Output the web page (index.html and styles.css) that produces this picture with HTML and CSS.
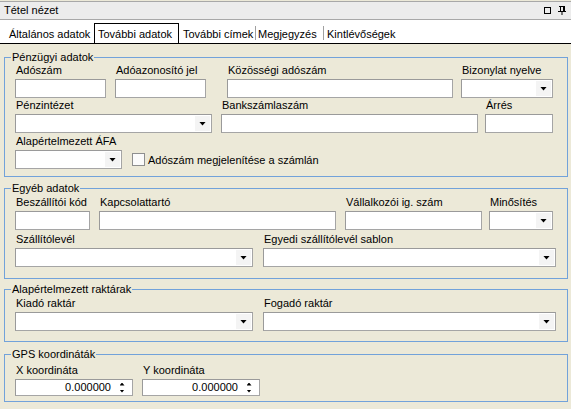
FILE: index.html
```html
<!DOCTYPE html>
<html>
<head>
<meta charset="utf-8">
<link rel="stylesheet" href="styles.css">
</head>
<body>
<div class="titlebar">
  <span class="title">Tétel nézet</span>
  <span class="tb-icons">
    <svg width="7" height="7" viewBox="0 0 7 7"><rect x="0.5" y="0.5" width="6" height="6" fill="none" stroke="#000"/></svg>
    <svg width="8" height="9" viewBox="0 0 8 9"><path d="M1 0.5h6M2.5 0.5v5M0 5.5h8M4 5.5v3.5" stroke="#000" fill="none"/><rect x="5" y="0" width="2" height="5.5" fill="#000"/></svg>
  </span>
</div>
<div class="tabs">
  <span class="tab t1">Általános adatok</span>
  <span class="tab active">További adatok</span>
  <span class="tab t3">További címek</span>
  <span class="sep"></span>
  <span class="tab t4">Megjegyzés</span>
  <span class="sep"></span>
  <span class="tab t5">Kintlévőségek</span>
</div>

<fieldset class="group g1">
  <legend>Pénzügyi adatok</legend>
  <div class="gbody">
    <div class="row">
      <div class="field w91"><label>Adószám</label><div class="input"></div></div>
      <div class="field w91 ml9"><label>Adóazonosító jel</label><div class="input"></div></div>
      <div class="field w226 ml21"><label>Közösségi adószám</label><div class="input"></div></div>
      <div class="field w92 ml8"><label>Bizonylat nyelve</label><div class="input combo"><span class="drop"></span></div></div>
    </div>
    <div class="row r2">
      <div class="field w197"><label>Pénzintézet</label><div class="input combo"><span class="drop"></span></div></div>
      <div class="field w257 ml9"><label>Bankszámlaszám</label><div class="input"></div></div>
      <div class="field w68 ml7"><label>Árrés</label><div class="input"></div></div>
    </div>
    <div class="row r3">
      <div class="field w107"><label>Alapértelmezett ÁFA</label><div class="input combo"><span class="drop"></span></div></div>
      <div class="check"><span class="box"></span><span class="check-label">Adószám megjelenítése a számlán</span></div>
    </div>
  </div>
</fieldset>

<fieldset class="group g2">
  <legend>Egyéb adatok</legend>
  <div class="gbody">
    <div class="row">
      <div class="field w75"><label>Beszállítói kód</label><div class="input"></div></div>
      <div class="field w237 ml9"><label>Kapcsolattartó</label><div class="input"></div></div>
      <div class="field w137 ml9"><label>Vállalkozói ig. szám</label><div class="input"></div></div>
      <div class="field w64 ml7"><label>Minősítés</label><div class="input combo"><span class="drop"></span></div></div>
    </div>
    <div class="row r2b">
      <div class="field w238"><label>Szállítólevél</label><div class="input combo"><span class="drop"></span></div></div>
      <div class="field w293 ml10"><label>Egyedi szállítólevél sablon</label><div class="input combo"><span class="drop"></span></div></div>
    </div>
  </div>
</fieldset>

<fieldset class="group g3">
  <legend>Alapértelmezett raktárak</legend>
  <div class="gbody">
    <div class="row">
      <div class="field w238"><label>Kiadó raktár</label><div class="input combo"><span class="drop"></span></div></div>
      <div class="field w293 ml10"><label>Fogadó raktár</label><div class="input combo"><span class="drop"></span></div></div>
    </div>
  </div>
</fieldset>

<fieldset class="group g4">
  <legend>GPS koordináták</legend>
  <div class="gbody">
    <div class="row">
      <div class="field w118"><label>X koordináta</label><div class="input spin"><span class="val">0.000000</span><span class="spinbtn"><span class="up"></span><span class="down"></span></span></div></div>
      <div class="field w118 ml9"><label>Y koordináta</label><div class="input spin"><span class="val">0.000000</span><span class="spinbtn"><span class="up"></span><span class="down"></span></span></div></div>
    </div>
  </div>
</fieldset>
</body>
</html>
```
FILE: styles.css
```css
* { box-sizing: border-box; }
html, body { margin: 0; padding: 0; }
body {
  width: 571px;
  height: 409px;
  overflow: hidden;
  background: #ece9d8;
  font-family: "Liberation Sans", Arial, sans-serif;
  font-size: 11px;
  color: #000;
}
.titlebar {
  margin-top: 1px;
  height: 19px;
  border-top: 1px solid #a8a8a8;
  border-bottom: 1px solid #a8a8a8;
  background: #ececec;
  display: flex;
  align-items: center;
  justify-content: space-between;
  padding-left: 4px;
}
.title { line-height: 17px; }
.tb-icons {
  display: flex;
  align-items: center;
  gap: 7px;
  margin-right: 5px;
}
.tb-icons svg { display: block; }
.tabs {
  height: 24px;
  background: #fff;
  border-bottom: 1px solid #000;
  display: flex;
  align-items: flex-end;
  padding-left: 5px;
}
.tab {
  display: block;
  height: 19px;
  padding-top: 1px;
  line-height: 18px;
  white-space: nowrap;
}
.t1 { width: 89px; padding-left: 4px; }
.active {
  width: 85px;
  height: 20px;
  padding-left: 3px;
  padding-top: 1px;
  border: 1px solid #000;
  border-bottom: none;
  line-height: 18px;
}
.t3 { width: 76px; padding-left: 4px; }
.t4 { width: 67px; padding-left: 2px; }
.t5 { padding-left: 3px; }
.sep {
  display: block;
  width: 1px;
  height: 14px;
  margin-bottom: 3px;
  background: #a0a0a0;
}
.group {
  margin: 0 3px 0 4px;
  padding: 0;
  border: 1px solid #72a2da;
  min-width: 0;
}
.group legend {
  margin-left: 6px;
  padding: 0 1px;
  font-size: 11px;
  line-height: 14px;
}
.gbody { padding: 0 10px; }
.g1 { margin-top: 6px; }
.g1 .gbody { padding-bottom: 7px; }
.g2 { margin-top: 4px; }
.g2 .gbody { padding-top: 1px; padding-bottom: 11px; }
.g3 { margin-top: 3px; }
.g3 .gbody { padding-top: 1px; padding-bottom: 10px; }
.g4 { margin-top: 5px; }
.g4 .gbody { padding-top: 3px; padding-bottom: 5px; }
.row { display: flex; align-items: flex-end; }
.r2 { margin-top: 1px; }
.r3 { margin-top: 2px; }
.r2b { margin-top: 3px; }
.field { display: flex; flex-direction: column; }
.field label {
  display: block;
  height: 15px;
  line-height: 13px;
  padding-left: 1px;
  white-space: nowrap;
}
.input {
  height: 19px;
  background: #fff;
  border: 1px solid #a5a5a5;
  border-top-color: #9a9a9a;
  border-left-color: #9a9a9a;
}
.combo {
  display: flex;
  justify-content: flex-end;
  padding: 1px;
}
.drop {
  display: flex;
  width: 15px;
  height: 15px;
  background: #f4f4f4;
  align-items: center;
  justify-content: center;
}
.drop::after {
  content: "";
  display: block;
  width: 7px;
  height: 4px;
  background: #000;
  clip-path: polygon(0 0, 100% 0, 50% 100%);
}
.spin {
  height: 17px;
  display: flex;
  align-items: center;
}
.val {
  flex: 1;
  text-align: right;
  padding-right: 4px;
  line-height: 15px;
}
.spinbtn {
  width: 14px;
  margin-right: 3px;
  display: flex;
  flex-direction: column;
  align-items: center;
  gap: 4px;
}
.up, .down {
  display: block;
  width: 5px;
  height: 3px;
  background: #000;
}
.up { clip-path: polygon(50% 0, 100% 100%, 0 100%); }
.down { clip-path: polygon(0 0, 100% 0, 50% 100%); }
.check {
  display: flex;
  align-items: center;
  margin-left: 10px;
  margin-bottom: 3px;
  height: 13px;
}
.box {
  display: block;
  width: 13px;
  height: 13px;
  border: 1px solid #8e8f8f;
  background: #fbfbfb;
}
.check-label { margin-left: 3px; white-space: nowrap; }
.w64 { width: 64px; }
.w68 { width: 68px; }
.w75 { width: 75px; }
.w91 { width: 91px; }
.w92 { width: 92px; }
.w107 { width: 107px; }
.w118 { width: 118px; }
.w137 { width: 137px; }
.w197 { width: 197px; }
.w226 { width: 226px; }
.w237 { width: 237px; }
.w238 { width: 238px; }
.w257 { width: 257px; }
.w293 { width: 293px; }
.ml7 { margin-left: 7px; }
.ml8 { margin-left: 8px; }
.ml9 { margin-left: 9px; }
.ml10 { margin-left: 10px; }
.ml21 { margin-left: 21px; }
```
